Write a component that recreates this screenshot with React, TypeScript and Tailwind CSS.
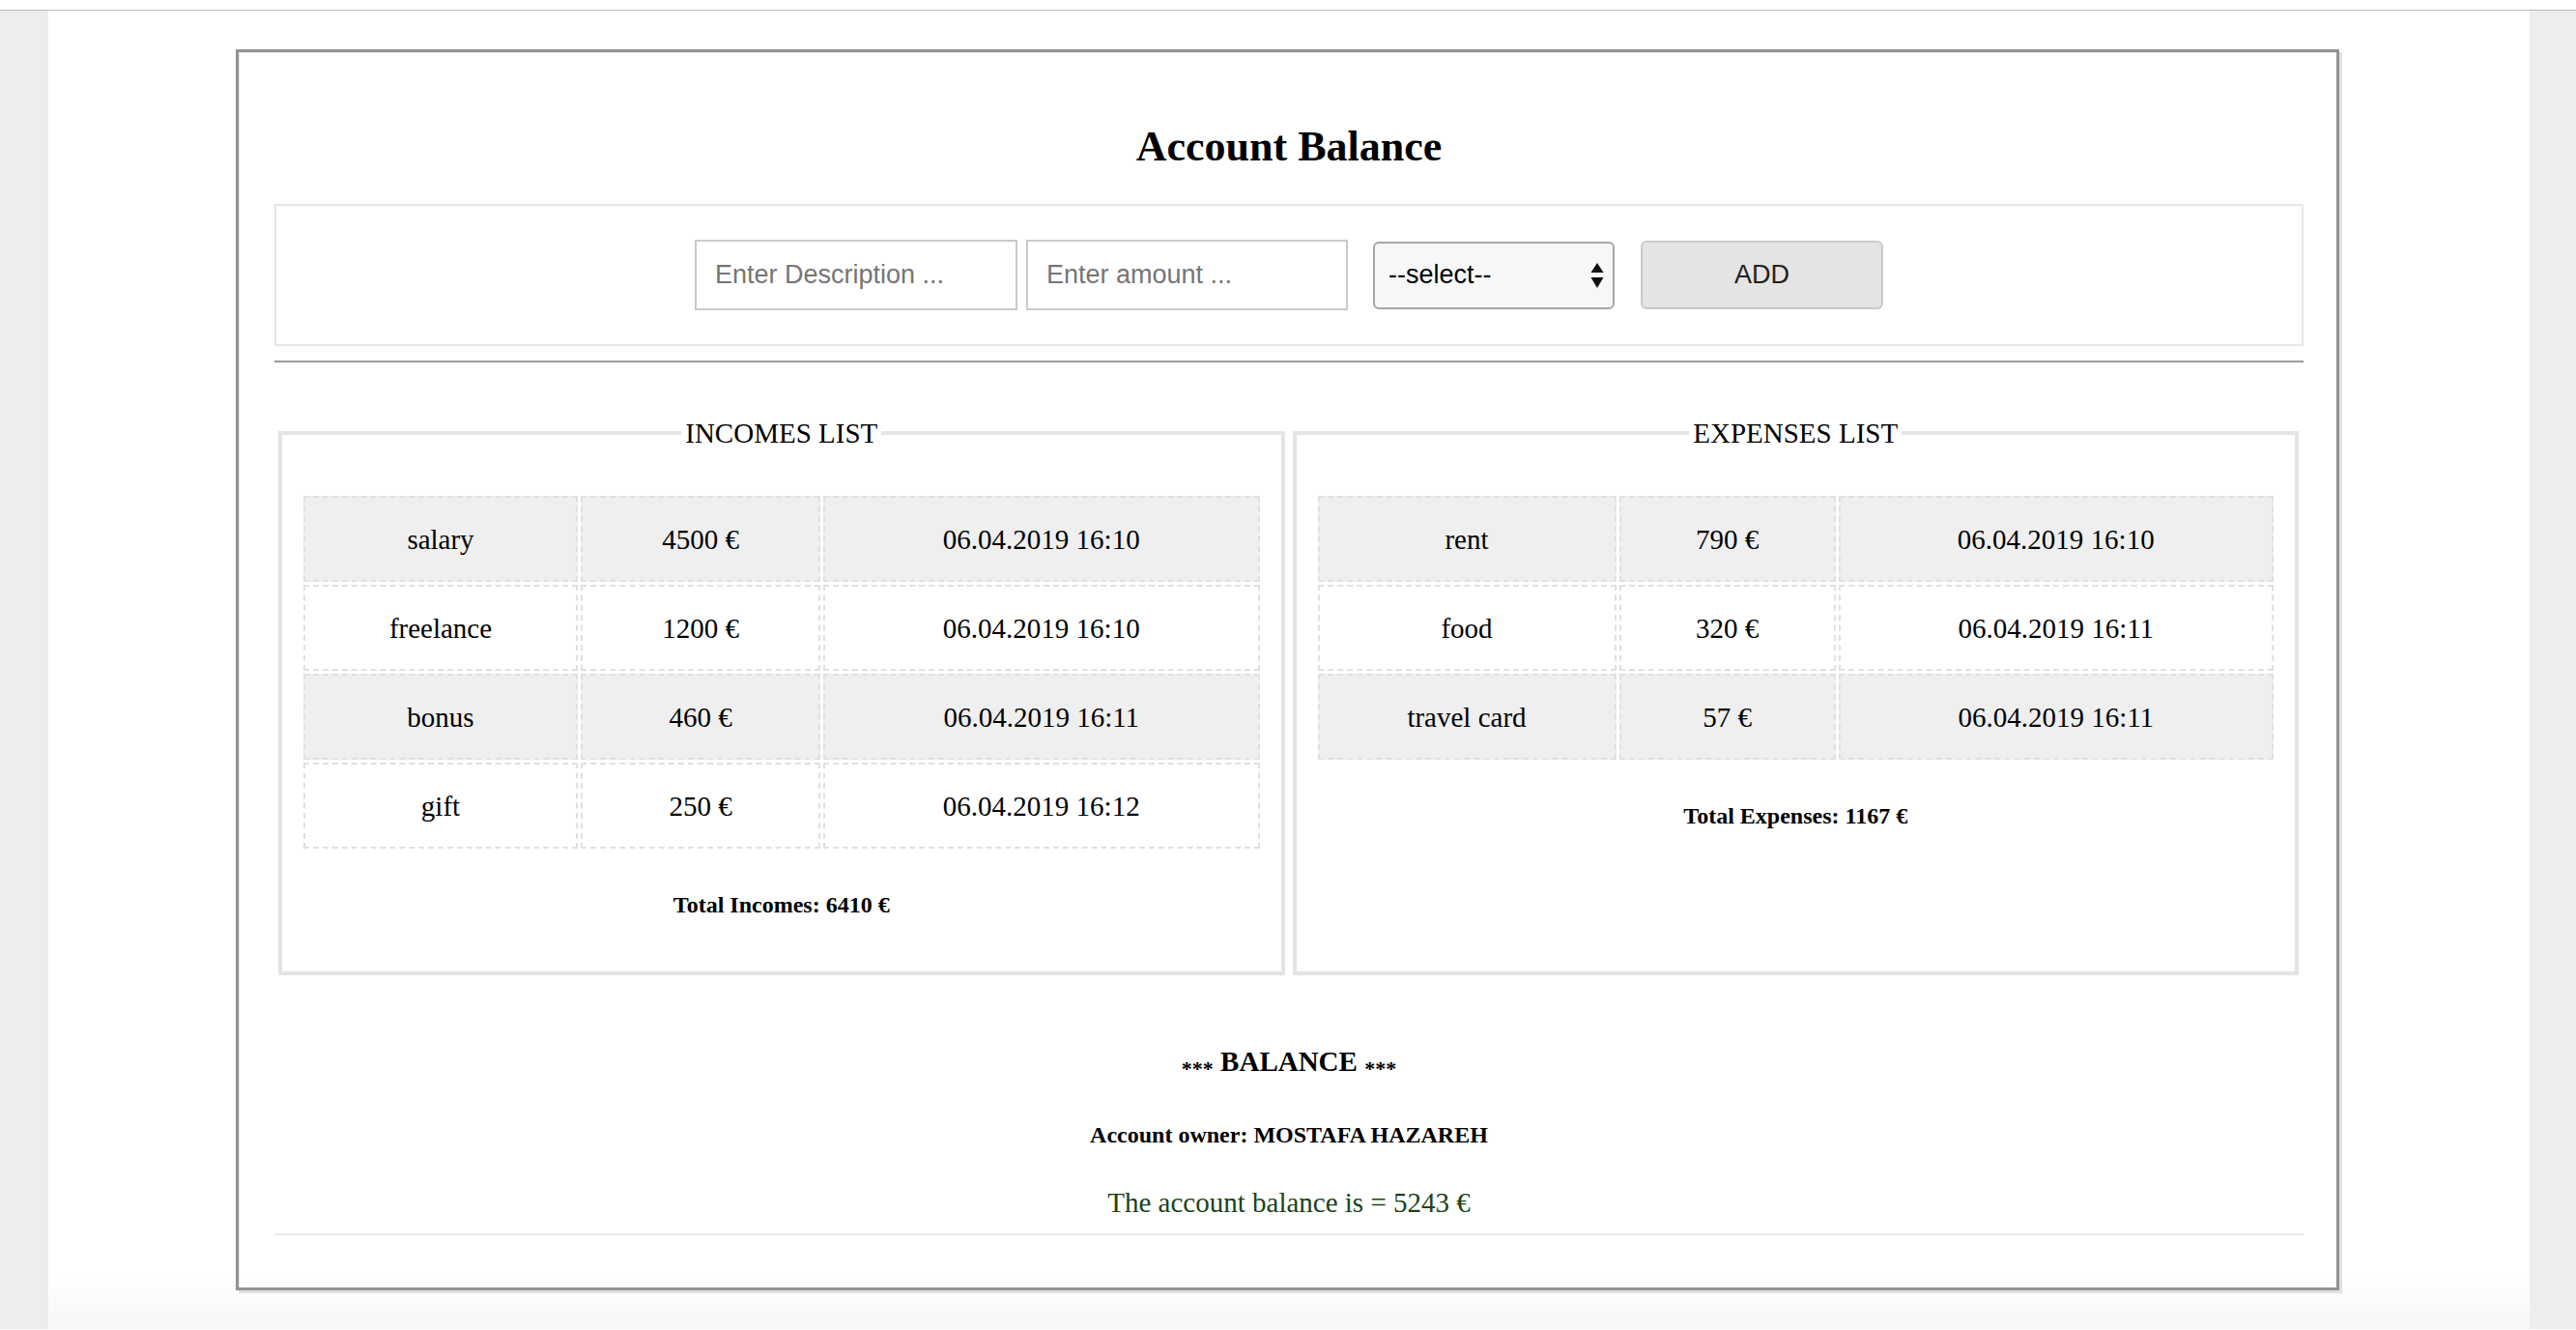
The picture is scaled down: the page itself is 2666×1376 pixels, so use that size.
import React from 'react';

type Entry = { title: string; amount: number; date: string };

const incomes: Entry[] = [
  { title: 'salary', amount: 4500, date: '06.04.2019 16:10' },
  { title: 'freelance', amount: 1200, date: '06.04.2019 16:10' },
  { title: 'bonus', amount: 460, date: '06.04.2019 16:11' },
  { title: 'gift', amount: 250, date: '06.04.2019 16:12' },
];

const expenses: Entry[] = [
  { title: 'rent', amount: 790, date: '06.04.2019 16:10' },
  { title: 'food', amount: 320, date: '06.04.2019 16:11' },
  { title: 'travel card', amount: 57, date: '06.04.2019 16:11' },
];

const serif = "font-['Liberation_Serif','Times_New_Roman',serif]";
const sans = "font-['Liberation_Sans',Arial,sans-serif]";

function ListBox({
  legend,
  items,
  total,
  totalLabel,
  cols,
}: {
  legend: string;
  items: Entry[];
  total: number;
  totalLabel: string;
  cols: string;
}) {
  return (
    <fieldset className="flex-1 border-4 border-[#e4e4e4] px-[22px] pb-[55px] pt-[48px]">
      <legend className="mx-auto px-[4px] text-[29px] leading-[34px] text-black">{legend}</legend>
      <div className={`grid ${cols} gap-[3px]`}>
        {items.map((item, i) => {
          const bg = i % 2 === 0 ? 'bg-[#efefef]' : 'bg-white';
          const cell = `flex h-[89px] items-center justify-center border-2 border-dashed border-[#e0e0e0] text-[29px] leading-[34px] ${bg}`;
          return (
            <React.Fragment key={item.title}>
              <div className={cell}>{item.title}</div>
              <div className={cell}>{item.amount} €</div>
              <div className={cell}>{item.date}</div>
            </React.Fragment>
          );
        })}
      </div>
      <p className="mt-[44px] text-center text-[24px] font-bold leading-[28px]">
        {totalLabel}: {total} €
      </p>
    </fieldset>
  );
}

export default function App() {
  const totalIn = incomes.reduce((s, e) => s + e.amount, 0);
  const totalOut = expenses.reduce((s, e) => s + e.amount, 0);

  return (
    <div className={`min-h-screen bg-white text-black ${serif}`}>
      <div className="h-[11px] border-b border-[#bcbcbc]" />
      <div className="flex min-h-[1364px]">
        <div className="w-[50px] shrink-0 bg-[#ededed]" />
        <main className="flex-1 bg-gradient-to-b from-white from-[96%] to-[#f7f7f7] pt-[40px]">
          <div className="ml-[194px] w-[2177px] border-[3px] border-[#939393] pb-[54px] pl-[37px] pr-[34px] pt-[72px] shadow-[3px_3px_0_#e0e0e0,inset_1px_1px_0_#e6e6e6]">
            <h1 className="text-center text-[44px] font-bold leading-[52px]">Account Balance</h1>

            <form
              className={`mt-[33px] flex h-[147px] items-center justify-center border-2 border-[#e6e6e6] ${sans}`}
              onSubmit={(e) => e.preventDefault()}
            >
              <input
                className="h-[73px] w-[334px] border-2 border-[#cacaca] bg-white px-[19px] text-[27px] outline-none placeholder:text-[#757575]"
                placeholder="Enter Description ..."
              />
              <input
                className="ml-[9px] h-[73px] w-[333px] border-2 border-[#cacaca] bg-white px-[19px] text-[27px] outline-none placeholder:text-[#757575]"
                placeholder="Enter amount ..."
              />
              <div className="ml-[26px] flex h-[70px] w-[250px] items-center justify-between rounded-[6px] border-2 border-[#a6a6a6] bg-[#f7f7f7] pl-[14px] pr-[9px] text-[27px] text-black">
                <span>--select--</span>
                <svg width="14" height="26" viewBox="0 0 14 26">
                  <path d="M7 0 L13.5 10 L0.5 10 Z" fill="#111" />
                  <path d="M7 26 L13.5 15 L0.5 15 Z" fill="#111" />
                </svg>
              </div>
              <button
                type="submit"
                className="ml-[27px] h-[71px] w-[251px] rounded-[6px] border-2 border-[#c9c9c9] bg-[#e4e4e4] text-[27px] text-[#222]"
              >
                ADD
              </button>
            </form>

            <hr className="mt-[15px] border-t-2 border-[#9b9b9b]" />

            <div className="mt-[56px] flex items-stretch gap-[8px] pl-[4px] pr-[5px]">
              <ListBox
                legend="INCOMES LIST"
                items={incomes}
                total={totalIn}
                totalLabel="Total Incomes"
                cols="grid-cols-[284px_248px_1fr]"
              />
              <ListBox
                legend="EXPENSES LIST"
                items={expenses}
                total={totalOut}
                totalLabel="Total Expenses"
                cols="grid-cols-[309px_224px_1fr]"
              />
            </div>

            <h2 className="mt-[72px] text-center text-[29px] font-bold leading-[34px]">
              <span className="align-[-5px] text-[22px]">***</span> BALANCE{' '}
              <span className="align-[-5px] text-[22px]">***</span>
            </h2>
            <h3 className="mt-[37px] text-center text-[24px] font-bold leading-[28px]">
              Account owner: MOSTAFA HAZAREH
            </h3>
            <p className="mt-[39px] text-center text-[29px] leading-[34px] text-[#1b4314]">
              The account balance is = {totalIn - totalOut} €
            </p>
            <hr className="mt-[15px] border-t-2 border-[#e9e9e9]" />
          </div>
        </main>
        <div className="w-[48px] shrink-0 bg-[#ededed]" />
      </div>
    </div>
  );
}
